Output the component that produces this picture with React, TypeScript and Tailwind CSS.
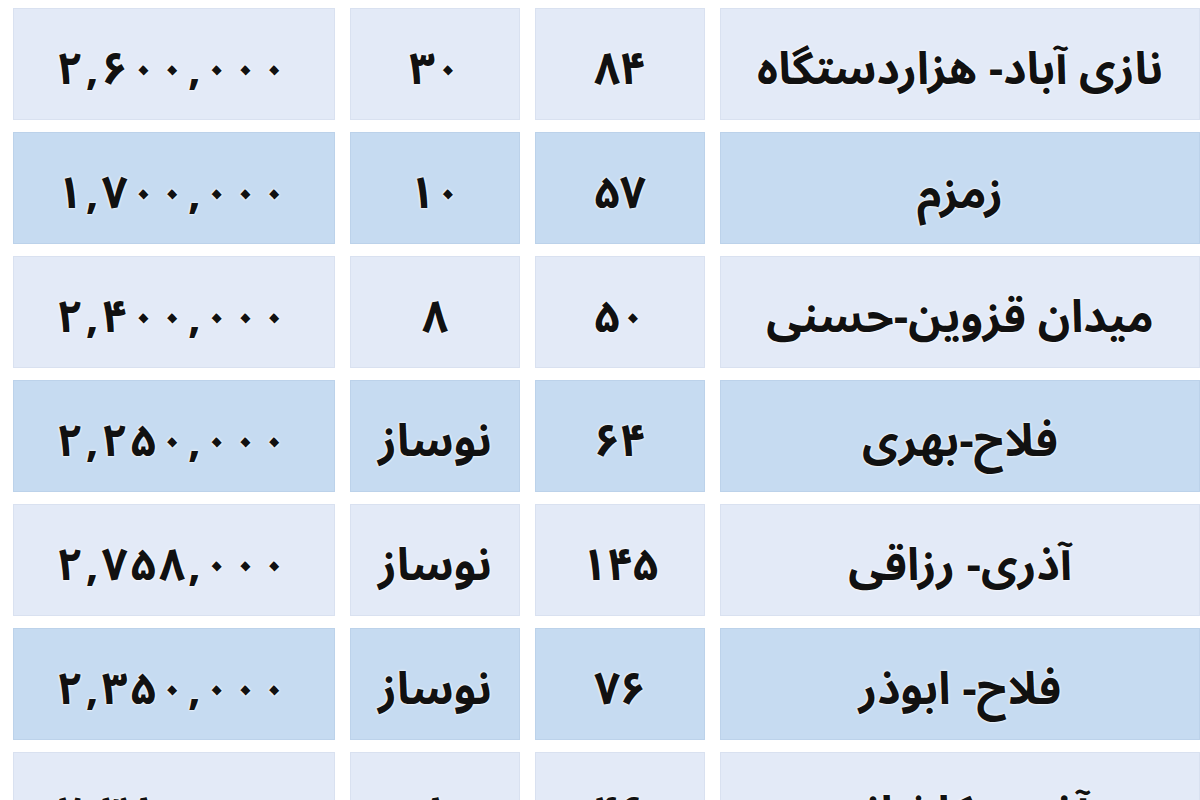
const rows = [
  { price: "۲,۶۰۰,۰۰۰", age: "۳۰", area: "۸۴", place: "نازی آباد- هزاردستگاه" },
  { price: "۱,۷۰۰,۰۰۰", age: "۱۰", area: "۵۷", place: "زمزم" },
  { price: "۲,۴۰۰,۰۰۰", age: "۸", area: "۵۰", place: "میدان قزوین-حسنی" },
  { price: "۲,۲۵۰,۰۰۰", age: "نوساز", area: "۶۴", place: "فلاح-بهری" },
  { price: "۲,۷۵۸,۰۰۰", age: "نوساز", area: "۱۴۵", place: "آذری- رزاقی" },
  { price: "۲,۳۵۰,۰۰۰", age: "نوساز", area: "۷۶", place: "فلاح- ابوذر" },
  { price: "۲,۳۸۰,۰۰۰", age: "۸", area: "۴۶", place: "آذری- کاشانی" },
];

function Cell({ dark, children }: { dark: boolean; children: React.ReactNode }) {
  return (
    <div
      className={`flex h-[112px] items-center justify-center pt-[12px] border ${
        dark ? "bg-[#c6dbf1] border-[#bcd2ea]" : "bg-[#e3eaf7] border-[#d9e1f0]"
      }`}
    >
      {children}
    </div>
  );
}

// letter-spacing is ignored on Arabic-script runs, so space the price digits by hand
function Price({ value }: { value: string }) {
  return (
    <span dir="ltr" className="flex gap-[3px] pr-[4px]">
      {value.split("").map((ch, i) => (
        <span key={i}>{ch}</span>
      ))}
    </span>
  );
}

export default function App() {
  return (
    <div
      dir="rtl"
      className="h-[800px] w-[1200px] overflow-hidden bg-white pl-[13px] pt-[8px] font-['Noto_Sans_Arabic','DejaVu_Sans',sans-serif] text-[45px] font-bold text-[#111] [text-shadow:0_0_3px_#fff,0_0_2px_#fff]"
    >
      <div className="grid grid-cols-[480px_170px_170px_322px] gap-x-[15px] gap-y-[12px]">
        {rows.map((r, i) => {
          const dark = i % 2 === 1;
          return (
            <div key={i} className="contents">
              <Cell dark={dark}>{r.place}</Cell>
              <Cell dark={dark}>{r.area}</Cell>
              <Cell dark={dark}>{r.age}</Cell>
              <Cell dark={dark}>
                <Price value={r.price} />
              </Cell>
            </div>
          );
        })}
      </div>
    </div>
  );
}
